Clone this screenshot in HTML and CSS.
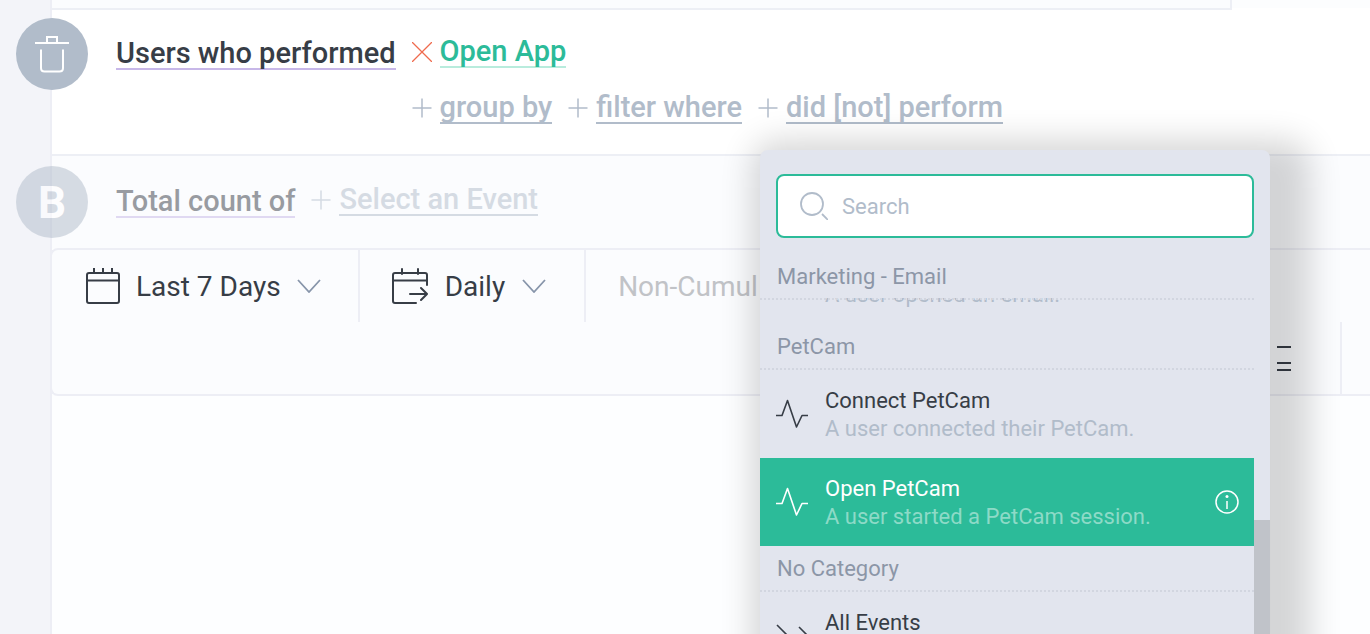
FILE: index.html
```html
<!DOCTYPE html>
<html lang="en">
<head>
<meta charset="utf-8">
<title>Event Segmentation</title>
<link rel="stylesheet" href="styles.css">
</head>
<body>
<svg class="sprite" aria-hidden="true">
  <symbol id="plus" viewBox="0 0 20 20"><path d="M10 0.5v19M0.500 10h19" fill="none" stroke="currentColor" stroke-width="1.500"/></symbol>
  <symbol id="pulse" viewBox="0 0 32 30"><path d="M0 16.500h6L11.500 1.500 20.500 28 26 16.500h6" fill="none" stroke="currentColor" stroke-width="1.600" stroke-linejoin="round"/></symbol>
  <symbol id="chevron" viewBox="0 0 24 14"><path d="M1 1l11 12L23 1" fill="none" stroke="currentColor" stroke-width="1.800"/></symbol>
</svg>
<div class="page">
  <aside class="rail"></aside>
  <main class="main">
    <div class="previous"></div>

    <section class="event active">
      <button class="badge" aria-label="Remove event">
        <svg width="36" height="38" viewBox="0 0 36 38" fill="none" stroke="currentColor" stroke-width="2"><path d="M1 8h34M13 8V2h10v6M7 14.500V33q0 3.500 3.500 3.500h15q3.500 0 3.500-3.500V14.500"/></svg>
      </button>
      <button class="measure link">Users who performed</button>
      <div class="builder">
        <div class="line">
          <div class="term chosen">
            <button class="remove" aria-label="Remove Open App"><svg width="20" height="20" viewBox="0 0 20 20"><path d="M0 0l20 20M20 0L0 20" fill="none" stroke="currentColor" stroke-width="1.300"/></svg></button>
            <button class="link">Open App</button>
          </div>
        </div>
        <div class="line options">
          <div class="term"><svg class="plus"><use href="#plus"/></svg><button class="link">group by</button></div>
          <div class="term"><svg class="plus"><use href="#plus"/></svg><button class="link">filter where</button></div>
          <div class="term"><svg class="plus"><use href="#plus"/></svg><button class="link">did [not] perform</button></div>
        </div>
      </div>
    </section>

    <section class="event muted">
      <div class="badge letter">B</div>
      <button class="measure link">Total count of</button>
      <div class="builder">
        <div class="line">
          <div class="term"><svg class="plus"><use href="#plus"/></svg><button class="link">Select an Event</button></div>
        </div>
      </div>
    </section>

    <section class="toolbar">
      <div class="tools">
        <button class="tool range">
          <svg width="34" height="36" viewBox="0 0 34 36" fill="none" stroke="currentColor" stroke-width="2"><rect x="1" y="5" width="32" height="30" rx="2"/><path d="M1 12.500h32M8 0v6M17 0v6M26 0v6"/></svg>
          <span>Last 7 Days</span>
          <svg class="chevron"><use href="#chevron"/></svg>
        </button>
        <button class="tool interval">
          <svg width="36" height="36" viewBox="0 0 36 36" fill="none" stroke="currentColor" stroke-width="2" stroke-linecap="round"><path d="M24 35H3q-2 0-2-2V7q0-2 2-2h30q2 0 2 2v10M1 12.500h34M10 1v5M26 1v5M18 26h17M29 20l6 6-6 6"/></svg>
          <span>Daily</span>
          <svg class="chevron"><use href="#chevron"/></svg>
        </button>
        <button class="tool faded"><span>Non-Cumul</span></button>
      </div>
      <div class="tools end">
        <button class="tool formula" aria-label="Formula">
          <svg width="16" height="28" viewBox="0 0 16 28" fill="none" stroke="currentColor" stroke-width="2"><path d="M1 3h14M1 19h14M1 26h14"/></svg>
        </button>
        <div class="tool tail"></div>
      </div>
    </section>
    <section class="chart"></section>
  </main>

  <div class="popover">
    <div class="searcharea">
      <label class="search">
        <svg width="28" height="28" viewBox="0 0 28 28" fill="none" stroke="currentColor" stroke-width="1.800"><circle cx="12" cy="12" r="11"/><path d="M22 22l6 6"/></svg>
        <input type="text" placeholder="Search" aria-label="Search">
      </label>
    </div>
    <div class="results">
      <div class="list">
        <section class="scrolled">
          <h3 class="category stuck">Marketing - Email</h3>
          <p class="description">A user opened an email.</p>
        </section>
        <h3 class="category">PetCam</h3>
        <button class="item">
          <svg class="pulse"><use href="#pulse"/></svg>
          <span class="copy"><span class="name">Connect PetCam</span><span class="description">A user connected their PetCam.</span></span>
        </button>
        <button class="item selected">
          <svg class="pulse"><use href="#pulse"/></svg>
          <span class="copy"><span class="name">Open PetCam</span><span class="description">A user started a PetCam session.</span></span>
          <svg class="info" width="24" height="24" viewBox="0 0 24 24" fill="none" stroke="currentColor" stroke-width="1.500"><circle cx="12" cy="12" r="11"/><path d="M12 11v8"/><circle cx="12" cy="6.500" r="1.500" fill="currentColor" stroke="none"/></svg>
        </button>
        <h3 class="category">No Category</h3>
        <button class="item">
          <svg width="32" height="24" viewBox="0 0 32 24" fill="none" stroke="currentColor" stroke-width="1.600"><path d="M1 1l12 12L1 23M23 3l9 9-9 9"/></svg>
          <span class="copy"><span class="name">All Events</span></span>
        </button>
      </div>
      <div class="track"><div class="thumb"></div></div>
    </div>
  </div>
</div>
</body>
</html>
```
FILE: styles.css
```css
* { box-sizing: border-box; }
body { margin: 0; background: #fcfdfe; color: #373d46; font-family: Roboto, "Liberation Sans", sans-serif; font-size: 28px; line-height: 32px; }
button { display: block; padding: 0; border: 0; background: none; color: inherit; font: inherit; text-align: left; white-space: nowrap; }
h3, p { margin: 0; font-weight: 400; }
svg { display: block; flex: none; }
.sprite { position: absolute; width: 0; height: 0; }
.page { position: relative; display: flex; height: 100vh; overflow: hidden; }
.rail { flex: none; width: 52px; background: #f3f4f9; border-right: 2px solid #edeef5; }
.main { flex: 1; min-width: 0; display: flex; flex-direction: column; }
.previous { height: 10px; margin-right: 138px; background: #fbfcfe; border: solid #edeff5; border-width: 0 2px 2px 0; }

.event { position: relative; display: flex; gap: 16px; padding: 36px 16px 30px 64px; }
.active { margin-top: -2px; border: solid #edeff5; border-width: 2px 0; background: #fff; }
.active::before { content: ""; position: absolute; right: 0; top: -2px; width: 138px; height: 2px; background: #fff; }
.muted { padding: 28px 16px 30px 64px; background: #fbfcfe; }
.muted > * { opacity: 0.5; }
.badge { position: absolute; left: -36px; top: 8px; display: grid; place-items: center; width: 72px; height: 72px; border-radius: 50%; background: #b1bcca; color: #fff; }
.muted .badge { top: 10px; }
.letter { padding-top: 2px; font-size: 44px; font-weight: 700; }
.link { padding-top: 2px; border-bottom: 2px solid #b1bcca; font-size: 29px; font-weight: 500; line-height: 30px; }
.event > .measure { align-self: flex-start; border-color: #c7b7e8; }
.active > .measure { margin-top: -10px; }
.builder { display: flex; flex-direction: column; gap: 22px; color: #b1bcca; }
.active .builder { margin-top: -12px; }
.muted .builder { margin-top: -2px; }
.line { display: flex; gap: 16px; }
.term { display: flex; align-items: center; gap: 8px; }
.plus, .remove { margin-top: 2px; }
.plus { width: 20px; height: 20px; }
.chosen { color: #2cbb99; }
.chosen .link { border-color: #b9ecdd; }
.remove { color: #ef6b4e; }

.toolbar { margin-left: -2px; border: 2px solid #edeef5; border-right: 0; border-radius: 8px 0 0 8px; background: #fbfcfe; z-index: 0; }
.tools { display: flex; height: 72px; }
.tool { display: flex; align-items: center; gap: 16px; padding: 0 36px 0 32px; border-right: 2px solid #edeef5; }
.tool span { padding-top: 2px; }
.range { padding: 0 37px 0 34px; }
.interval { padding-right: 38px; gap: 17px; }
.faded { color: #c1c3c7; border: 0; }
.chevron { width: 24px; height: 14px; color: #8795aa; }
.end { justify-content: flex-end; }
.formula { padding: 0 48px; }
.tail { width: 28px; padding: 0; border: 0; }
.chart { flex: 1; background: #fdfeff; }

.popover { position: absolute; left: 760px; top: 150px; bottom: 0; width: 510px; display: flex; flex-direction: column; border-radius: 8px 8px 0 0; background: #e2e5ee; box-shadow: 16px 14px 32px 24px rgba(0, 0, 0, 0.16); font-size: 22px; line-height: 28px; }
.searcharea { padding: 24px 16px 16px; }
.search { display: flex; align-items: center; gap: 14px; height: 64px; padding: 0 22px; border: 2px solid #2cbb99; border-radius: 8px; background: #fff; color: #b1bcca; }
.search input { flex: 1; min-width: 0; padding: 2px 0 0; border: 0; outline: 0; background: none; color: #373d46; font: inherit; }
.search input::placeholder { color: #b1bcca; opacity: 1; }
.results { flex: 1; min-height: 0; display: flex; overflow: hidden; }
.list { flex: 1; min-width: 0; }
.scrolled { position: relative; display: flex; flex-direction: column; justify-content: flex-end; height: 70px; padding: 0 16px 15px 65px; }
.category { height: 46px; padding: 9px 17px 0; border-bottom: 2px dotted #d2d6e0; background: #e2e5ee padding-box; color: #8c96a7; font-size: 22px; }
.stuck { position: absolute; left: 0; right: 0; top: 0; }
.item { display: flex; align-items: center; gap: 17px; width: 100%; height: 88px; padding: 0 15px 0 16px; }
.copy { flex: 1; align-self: flex-start; display: flex; flex-direction: column; padding-top: 17px; }
.description { color: #b1bcca; }
.pulse { width: 32px; height: 30px; }
.selected { background: #2cbb99; color: #fff; }
.selected .description { color: #8ddac7; }
.track { width: 16px; padding-top: 266px; }
.thumb { height: 160px; background: #c0c3c9; }
```
